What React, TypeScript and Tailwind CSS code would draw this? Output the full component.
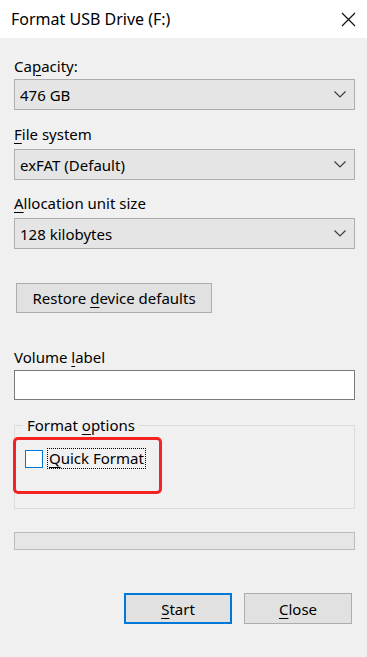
import React from "react";

const font = { fontFamily: '"Noto Sans", "Open Sans", sans-serif' };

function U({ children }: { children: React.ReactNode }) {
  return <span className="underline underline-offset-[3px] decoration-1">{children}</span>;
}

function Chevron() {
  return (
    <svg width="12" height="7" viewBox="0 0 12 7" className="block">
      <polyline points="0.5,0.5 6,6 11.5,0.5" fill="none" stroke="#3c3c3c" strokeWidth="1.2" />
    </svg>
  );
}

function Combo({ value, className = "" }: { value: string; className?: string }) {
  return (
    <div className={`flex h-[31px] items-center justify-between border border-[#adadad] bg-[#e5e5e5] pl-[5px] pr-[8px] ${className}`}>
      <span className="text-[15px] leading-[20px] text-black">{value}</span>
      <Chevron />
    </div>
  );
}

export default function App() {
  return (
    <div className="w-[367px] h-[657px] bg-[#f0f0f0] flex flex-col text-black" style={font}>
      <div className="h-[38px] bg-white flex items-center justify-between pl-[11px] pr-[11px]">
        <span className="text-[16px] leading-[20px] text-black">Format USB Drive (F:)</span>
        <svg width="15" height="15" viewBox="0 0 15 15" className="block">
          <path d="M1 1 L14 14 M14 1 L1 14" stroke="#111" strokeWidth="1.2" fill="none" />
        </svg>
      </div>
      <div className="flex flex-col pl-[14px] pr-[12px]">
        <div className="mt-[18px] text-[15px] leading-[20px]">Ca<U>p</U>acity:</div>
        <Combo value="476 GB" className="mt-[3px]" />
        <div className="mt-[14px] text-[15px] leading-[20px]"><U>F</U>ile system</div>
        <Combo value="exFAT (Default)" className="mt-[5px]" />
        <div className="mt-[13px] text-[15px] leading-[20px]"><U>A</U>llocation unit size</div>
        <Combo value="128 kilobytes" className="mt-[5px]" />
        <div className="mt-[34px] pl-[2px]">
          <div className="w-[196px] h-[30px] border border-[#adadad] bg-[#e1e1e1] flex items-center justify-center text-[15px] leading-[20px]">
            <span>Restore <U>d</U>evice defaults</span>
          </div>
        </div>
        <div className="mt-[34px] text-[15px] leading-[20px]">Volume <U>l</U>abel</div>
        <div className="mt-[3px] h-[30px] border border-[#7a7a7a] bg-white" />
        <div className="relative mt-[25px] h-[84px] border border-[#dcdcdc]">
          <div className="absolute left-[8px] top-[-11px] bg-[#f0f0f0] px-[4px] text-[15px] leading-[20px]">
            <span>Format <U>o</U>ptions</span>
          </div>
          <div className="flex items-center pl-[10px] pt-[22px]">
            <div className="w-[18px] h-[18px] border border-[#0078d7] bg-white" />
            <div className="ml-[4px] border border-dotted border-black px-[1px] text-[15px] leading-[19px]">
              <span><U>Q</U>uick Format</span>
            </div>
          </div>
          <div className="absolute left-[-2px] top-[11px] w-[149px] h-[57px] border-[3px] border-[#f52222] rounded-[5px]" />
        </div>
        <div className="mt-[23px] h-[18px] border border-[#bcbcbc] bg-[#e6e6e6]" />
        <div className="mt-[43px] flex justify-end gap-[12px] pr-[3px]">
          <div className="w-[108px] h-[31px] border-2 border-[#0078d7] bg-[#e1e1e1] flex items-center justify-center text-[15px] leading-[20px]">
            <span><U>S</U>tart</span>
          </div>
          <div className="w-[108px] h-[31px] border border-[#adadad] bg-[#e1e1e1] flex items-center justify-center text-[15px] leading-[20px]">
            <span><U>C</U>lose</span>
          </div>
        </div>
      </div>
    </div>
  );
}
